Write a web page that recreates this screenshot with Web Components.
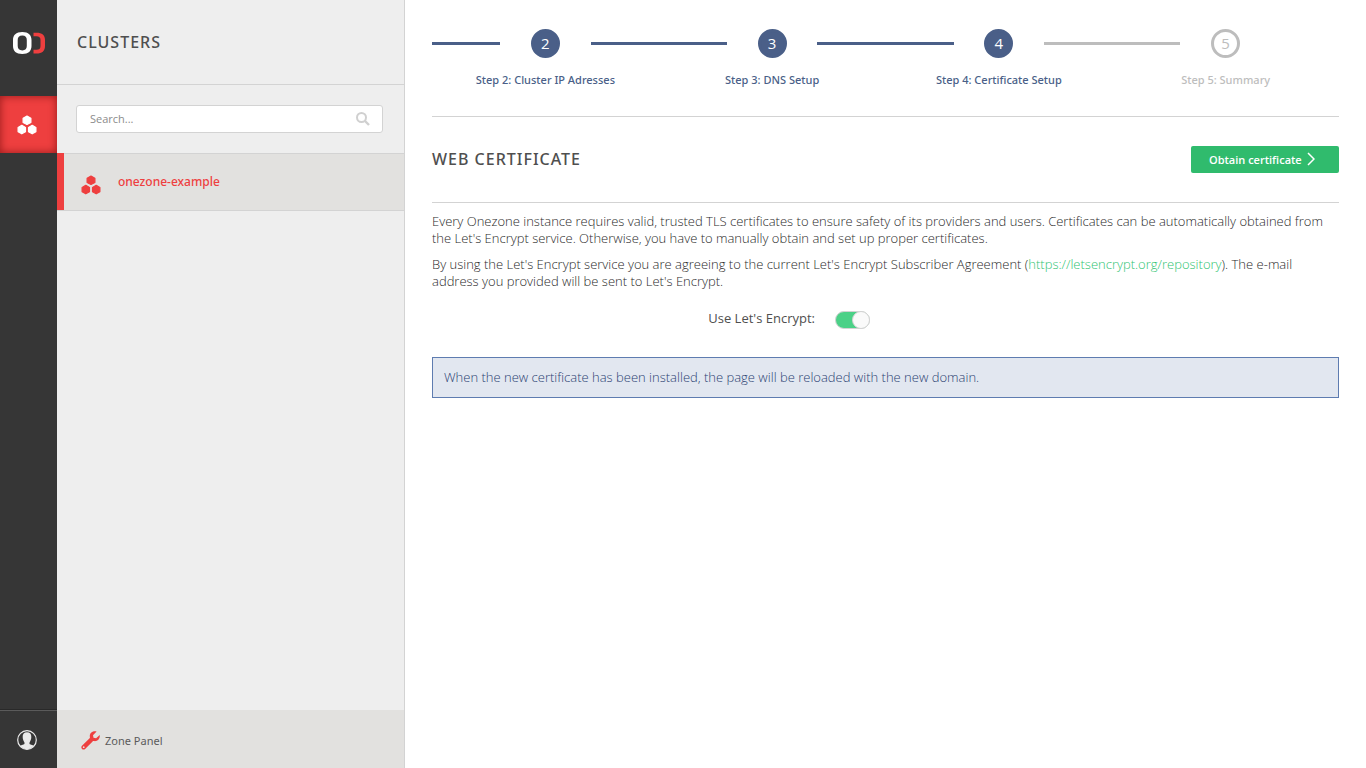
<!DOCTYPE html>
<html lang="en">
<head>
<meta charset="utf-8">
<title>Onezone – Certificate Setup</title>
<style>
  html, body { margin: 0; min-height: 100vh; }
  body { --ui-font: "Noto Sans", "Open Sans", sans-serif; font-family: "Open Sans", "Noto Sans", sans-serif; font-size: 13px; line-height: 17px; color: #4f4f4f; background: #fff; }
</style>
</head>
<body>
<oz-app>
  <oz-main-menu slot="menu"></oz-main-menu>
  <oz-sidebar slot="sidebar" heading="Clusters">
    <oz-cluster-item>onezone-example</oz-cluster-item>
  </oz-sidebar>
  <oz-steps>
    <oz-step number="2" state="done">Step 2: Cluster IP Adresses</oz-step>
    <oz-step number="3" state="done">Step 3: DNS Setup</oz-step>
    <oz-step number="4" state="current">Step 4: Certificate Setup</oz-step>
    <oz-step number="5" state="todo">Step 5: Summary</oz-step>
  </oz-steps>
  <oz-certificate></oz-certificate>
</oz-app>

<script>
const define = (name, html, setup) => {
  const template = document.createElement('template');
  template.innerHTML = html;
  customElements.define(name, class extends HTMLElement {
    constructor() {
      super();
      this.attachShadow({ mode: 'open' }).append(template.content.cloneNode(true));
    }
    connectedCallback() { if (setup) setup(this, this.shadowRoot); }
  });
};

define('oz-icon-clusters', `
<style>:host { display: block; width: 20px; height: 20px; } svg { display: block; }</style>
<svg width="20" height="20" viewBox="0 0 20 20" fill="currentColor" stroke="currentColor" stroke-width="1.200" stroke-linejoin="round" aria-hidden="true">
  <path d="M10 1.100l3.900 2.100v4.300L10 9.500 6.100 7.500V3.200z"/>
  <path d="M4.800 10.300l3.700 2.100v4.300l-3.700 2.100-3.700-2.100v-4.300z"/>
  <path d="M15.200 10.300l3.700 2.100v4.300l-3.700 2.100-3.700-2.100v-4.300z"/>
</svg>`);

define('oz-app', `
<style>
  :host { display: grid; grid-template-columns: 57px 348px minmax(0, 1fr); min-height: 100vh; }
  main { padding: 0 27px; }
</style>
<slot name="menu"></slot>
<slot name="sidebar"></slot>
<main><slot></slot></main>`);

define('oz-main-menu', `
<style>
  :host { display: flex; flex-direction: column; background: #363636; color: #fff; }
  a { color: inherit; }
  .logo { display: flex; align-items: center; justify-content: center; height: 96px; box-sizing: border-box; padding-bottom: 10px; }
  .item { display: flex; align-items: center; box-sizing: border-box; height: 57px; padding-left: 17px; }
  .active { background: #ee3f3f; box-shadow: inset 0 0 8px rgba(90, 0, 0, .6); }
  .user { margin-top: auto; height: 58px; border-top: 1px solid #5b5b5b; color: #eaeaea; box-shadow: 0 -1px #292929; }
  svg { display: block; }
</style>
<a class="logo" href="#" aria-label="Onezone">
  <svg width="32" height="22" viewBox="0 0 32 22" aria-hidden="true">
    <path fill="#fff" fill-rule="evenodd" d="M9.300 0C15.500 0 18.500 3 18.500 8v6c0 5-3 8-9.200 8S0 19 0 14V8c0-5 3-8 9.300-8zm0 3.600C6.200 3.600 4.700 5.200 4.700 8v6c0 2.800 1.500 4.400 4.600 4.400s4.500-1.600 4.500-4.400V8c0-2.800-1.400-4.400-4.500-4.400z"/>
    <path fill="#ee3f3f" d="M20.500.7h3C29 .7 32 3 32 8v6c0 5-3 7.500-8.500 7.500h-3v-3.700h3c2.600 0 4-1.100 4-3.800V8c0-2.600-1.400-3.700-4-3.700h-3z"/>
  </svg>
</a>
<a class="item active" href="#clusters" aria-label="Clusters"><oz-icon-clusters></oz-icon-clusters></a>
<a class="item user" href="#user" aria-label="User">
  <svg width="20" height="20" viewBox="0 0 20 20" aria-hidden="true">
    <circle cx="10" cy="10" r="9.300" fill="none" stroke="currentColor" stroke-width="1.200"/>
    <path fill="currentColor" d="M10 2.300c3 0 4.500 2 4.300 4.800 0 2-.7 3.900-1.600 5.100-.4.600-.3 1.700.2 2.100l4.200 1.500C15 18 12.700 19.300 10 19.300S5 18 2.900 15.800l4.200-1.500c.5-.4.600-1.500.2-2.100-.9-1.200-1.600-3.100-1.600-5.100-.2-2.800 1.300-4.800 4.300-4.800z"/>
  </svg>
</a>`);

define('oz-sidebar', `
<style>
  :host { display: flex; flex-direction: column; box-sizing: border-box; background: #eee; border-right: 1px solid #d3d3d3; font-family: var(--ui-font); }
  header { display: flex; align-items: center; height: 84px; padding-left: 20px; border-bottom: 1px solid #d3d3d3; }
  h1 { margin: 0; font-size: 16px; line-height: 20px; font-weight: 500; letter-spacing: 1px; text-transform: uppercase; }
  .search { padding: 20px 21px 20px 19px; }
  .box { display: flex; align-items: center; box-sizing: border-box; height: 28px; padding: 0 12px 0 13px; background: #fff; border: 1px solid #d3d3d3; border-radius: 3px; }
  input { flex: 1; min-width: 0; height: 16px; padding: 0 0 2px; box-sizing: border-box; border: 0; outline: 0; background: none; font-family: "Open Sans", sans-serif; font-size: 11px; color: inherit; }
  input::placeholder { color: #8c8c8c; opacity: 1; }
  nav { flex: 1; }
  .panel { display: flex; align-items: center; gap: 5px; height: 58px; padding: 2px 0 0 24px; box-sizing: border-box; background: #e2e1df; color: #5b5b5b; font-size: 11px; text-decoration: none; }
  svg { display: block; }
</style>
<header><h1></h1></header>
<div class="search">
  <div class="box">
    <input type="text" placeholder="Search..." aria-label="Search">
    <svg width="14" height="14" viewBox="0 0 14 14" fill="none" stroke="#d0d0d0" stroke-width="2" aria-hidden="true"><circle cx="5.500" cy="5.500" r="4.500"/><path d="M9 9l4 4" stroke-width="2.400"/></svg>
  </div>
</div>
<nav><slot></slot></nav>
<a class="panel" href="#panel">
  <svg width="19" height="19" viewBox="0 0 19 19" aria-hidden="true"><path fill="#ee3f3f" fill-rule="evenodd" d="M15.600.6L12 4.200l.5 2.500 2.600.6L18.700 4c.7 3.600-2.300 7-6 6.100-.4-.1-.8 0-1.100.3l-7.500 7.500c-.9.900-2.200.9-3.100 0s-.9-2.200 0-3.100l7.600-7.500c.3-.3.400-.7.3-1.100C8.100 2.500 11.500-.7 15.600.6zM2.700 15.300a.9.900 0 1 0 0 1.800.9.900 0 0 0 0-1.800z"/></svg>
  Zone Panel
</a>`, (host, root) => { root.querySelector('h1').textContent = host.getAttribute('heading'); });

define('oz-cluster-item', `
<style>
  :host { display: flex; border-bottom: 1px solid #d3d3d3; }
  .mark { width: 7px; background: #ee3f3f; }
  a { flex: 1; display: flex; align-items: center; gap: 17px; height: 56px; padding-left: 17px; background: #e2e1df; border-top: 1px solid #d3d3d3; color: #ee3f3f; font-size: 12px; font-weight: 500; text-decoration: none; }
  oz-icon-clusters { margin-top: 5px; }
  .name { padding-bottom: 1px; }
</style>
<div class="mark"></div>
<a href="#onezone-example"><oz-icon-clusters></oz-icon-clusters><span class="name"><slot></slot></span></a>`);

define('oz-steps', `
<style>:host { display: flex; padding: 29px 0 28px; border-bottom: 1px solid #d3d3d3; }</style>
<slot></slot>`);

define('oz-step', `
<style>
  :host { display: block; flex: 1; --tone: #4a5f88; --next: #4a5f88; color: var(--tone); text-align: center; }
  :host([state="current"]) { --next: #bdbdbd; }
  :host([state="todo"]) { --tone: #bdbdbd; --next: transparent; }
  .track { display: flex; align-items: center; justify-content: space-between; }
  .line { width: 30%; height: 3px; background: var(--tone); }
  .line.after { background: var(--next); }
  .circle { display: flex; align-items: center; justify-content: center; box-sizing: border-box; width: 29px; height: 29px; border: 3px solid var(--tone); border-radius: 50%; background: var(--tone); color: #fff; font-size: 15px; }
  :host([state="todo"]) .circle { background: #fff; color: var(--tone); }
  .title { padding-top: 13px; font-family: var(--ui-font); font-size: 11px; font-weight: 500; }
</style>
<div class="track"><div class="line"></div><div class="circle"></div><div class="line after"></div></div>
<div class="title"><slot></slot></div>`, (host, root) => { root.querySelector('.circle').textContent = host.getAttribute('number'); });

define('oz-certificate', `
<style>
  :host { display: block; }
  header { display: flex; align-items: center; justify-content: space-between; height: 85px; border-bottom: 1px solid #d3d3d3; }
  h2 { margin: 0; padding-bottom: 2px; font-family: var(--ui-font); font-size: 16px; line-height: 20px; font-weight: 500; letter-spacing: 1px; text-transform: uppercase; }
  button { display: flex; align-items: center; gap: 5px; width: 148px; height: 27px; padding: 0 18px 1px; border: 0; border-radius: 2px; background: #30bb6d; color: #fff; font: inherit; font-size: 11px; font-weight: 600; white-space: nowrap; }
  p { margin: 0 0 9px; }
  .text { padding-top: 10px; color: #2b2b2b; }
  .text, .alert { font-weight: 300; }
  .text a { color: #2fc472; text-decoration: none; }
  .field { display: grid; grid-template-columns: 383px 1fr; gap: 20px; padding: 11px 0 28px; font-weight: 500; }
  .field label { text-align: right; }
  .toggle { appearance: none; display: flex; justify-content: flex-end; box-sizing: border-box; width: 35px; height: 18px; margin: 1px 0 0; border: 1px solid #d3d3d3; border-radius: 9px; background: #4bd187; }
  .toggle::before { content: ""; box-sizing: border-box; width: 18px; height: 18px; margin: -1px; border: 1px solid #d3d3d3; border-radius: 50%; background: #fafafa; }
  .toggle:not(:checked) { justify-content: flex-start; background: #ddd; }
  .alert { padding: 11px; border: 1px solid #5e7cb0; background: #e2e7f0; color: #2b4272; }
</style>
<header>
  <h2>Web certificate</h2>
  <button type="button">Obtain certificate
    <svg width="8" height="14" viewBox="0 0 8 14" fill="none" stroke="#fff" stroke-width="1.500" aria-hidden="true"><path d="M1 1l6 6-6 6"/></svg>
  </button>
</header>
<div class="text">
  <p>Every Onezone instance requires valid, trusted TLS certificates to ensure safety of its providers and users. Certificates can be automatically obtained from the Let's Encrypt service. Otherwise, you have to manually obtain and set up proper certificates.</p>
  <p>By using the Let's Encrypt service you are agreeing to the current Let's Encrypt Subscriber Agreement (<a href="https://letsencrypt.org/repository">https://letsencrypt.org/repository</a>). The e-mail address you provided will be sent to Let's Encrypt.</p>
</div>
<div class="field"><label for="encrypt">Use Let's Encrypt:</label><input class="toggle" id="encrypt" type="checkbox" role="switch" checked></div>
<div class="alert" role="status">When the new certificate has been installed, the page will be reloaded with the new domain.</div>`);
</script>
</body>
</html>
